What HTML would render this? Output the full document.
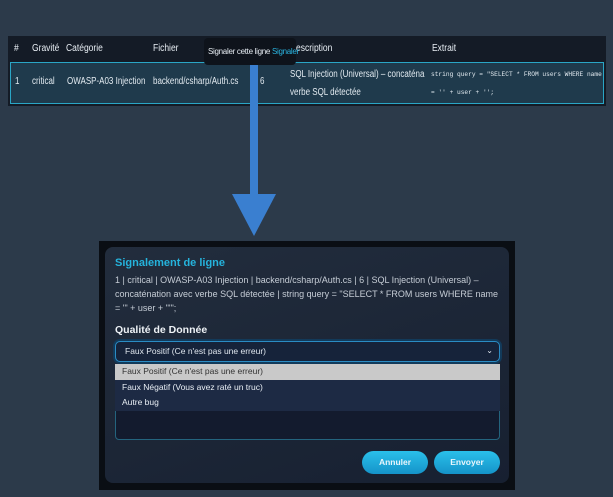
<!DOCTYPE html>
<html><head><style>
*{box-sizing:border-box;margin:0;padding:0}
body{width:613px;height:497px;background:#2c3a4a;font-family:"Liberation Sans",sans-serif;position:relative;overflow:hidden;color:#e6ecf2}
.tbl{position:absolute;left:8px;top:36px;width:598px;height:70px;background:#141b26}
.hd{position:absolute;top:0;height:26px;line-height:26px;font-size:10px;color:#e8eef4;transform:scaleX(.85);transform-origin:left;white-space:nowrap}
.row{position:absolute;left:2px;top:26px;width:594px;height:42px;border:1.5px solid #2aa6c6;background:#1f3a4c}
.c{position:absolute;font-size:10px;color:#e2eaf0;transform:scaleX(.8);transform-origin:left;white-space:nowrap}
.mono{font-family:"Liberation Mono",monospace;font-size:6.2px;line-height:18px;transform:none}
.tip{position:absolute;left:204px;top:38px;width:92px;height:27px;background:#0e131b;border-radius:4px;font-size:8px;line-height:27px;padding-left:4px;white-space:nowrap;letter-spacing:-.3px}
.modal{position:absolute;left:99px;top:241px;width:416px;height:249px;background:#0a0e14}
.card{position:absolute;left:6px;top:6px;width:404px;height:236px;border-radius:8px;background:linear-gradient(160deg,#222d3d,#172031)}
.t{position:absolute;left:10px;top:10px;font-size:11px;font-weight:bold;color:#25b3dc}
.p{position:absolute;left:10px;top:26px;width:390px;font-size:9px;line-height:14px;color:#c6cdd6}
.q{position:absolute;left:10px;top:77px;font-size:10.5px;font-weight:bold;color:#eef2f6}
.sel{position:absolute;left:10px;top:94px;width:385px;height:21px;border:1.5px solid #2a8cc4;border-radius:5px;background:#16233a;box-shadow:0 0 0 2px #123a5a;font-size:8.5px;line-height:18px;padding-left:9px;color:#dfe6ee}
.sel span{position:absolute;right:6px;top:0;font-size:8px}
.ta{position:absolute;left:10px;top:118px;width:385px;height:75px;border:1px solid #24647e;border-radius:4px;background:#131b2e}
.dd{position:absolute;left:10px;top:117px;width:385px;height:47px;background:#1d2a44;font-size:8.5px}
.dd div{height:15.5px;line-height:15.5px;padding-left:7px;color:#e8eef4}
.dd .a{background:#c9c9c9;color:#333}
.btn{position:absolute;top:204px;width:66px;height:23px;border-radius:12px;background:linear-gradient(#2ac0ea,#1593c9);font-size:8.5px;font-weight:bold;text-align:center;line-height:23px;color:#eaf6fc}
</style></head><body>
<div class="tbl">
<div class="hd" style="left:6px">#</div>
<div class="hd" style="left:24px">Gravité</div>
<div class="hd" style="left:58px">Catégorie</div>
<div class="hd" style="left:145px">Fichier</div>
<div class="hd" style="left:288px">escription</div>
<div class="hd" style="left:424px">Extrait</div>
<div class="row">
<div class="c" style="left:4px;top:13px">1</div>
<div class="c" style="left:21px;top:13px">critical</div>
<div class="c" style="left:56px;top:13px">OWASP-A03 Injection</div>
<div class="c" style="left:142px;top:13px">backend/csharp/Auth.cs</div>
<div class="c" style="left:249px;top:13px">6</div>
<div class="c" style="left:279px;top:3px;line-height:18px">SQL Injection (Universal) – concaténa<br>verbe SQL détectée</div>
<div class="c mono" style="left:420px;top:3px">string query = "SELECT * FROM users WHERE name<br>= '' + user + '';</div>
</div>
</div>
<svg style="position:absolute;left:0;top:0" width="613" height="497"><rect x="250" y="65" width="8" height="135" fill="#3a7fd0"/><polygon points="232,194 276,194 254,236" fill="#3a7fd0"/></svg>
<div class="tip">Signaler cette ligne <span style="color:#2ab4e0">Signaler</span></div>
<div class="modal"><div class="card">
<div class="t">Signalement de ligne</div>
<div class="p">1 | critical | OWASP-A03 Injection | backend/csharp/Auth.cs | 6 | SQL Injection (Universal) – concaténation avec verbe SQL détectée | string query = "SELECT * FROM users WHERE name = '" + user + "'";</div>
<div class="q">Qualité de Donnée</div>
<div class="sel">Faux Positif (Ce n'est pas une erreur)<span>⌄</span></div>
<div class="ta"></div>
<div class="dd"><div class="a">Faux Positif (Ce n'est pas une erreur)</div><div>Faux Négatif (Vous avez raté un truc)</div><div>Autre bug</div></div>
<div class="btn" style="left:257px">Annuler</div>
<div class="btn" style="left:329px">Envoyer</div>
</div></div>
</body></html>
